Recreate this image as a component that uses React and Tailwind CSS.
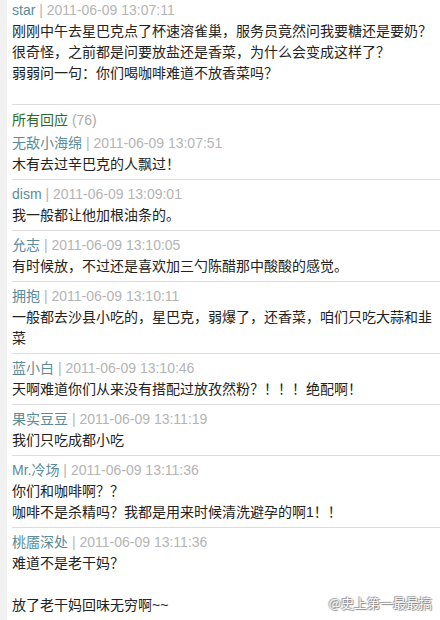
import React from "react";

const font = { fontFamily: '"Liberation Sans", Arial, "Noto Sans CJK SC", sans-serif' };

const comments = [
  { name: "dism", time: "2011-06-09 13:09:01", lines: ["我一般都让他加根油条的。"] },
  { name: "允志", time: "2011-06-09 13:10:05", lines: ["有时候放，不过还是喜欢加三勺陈醋那中酸酸的感觉。"] },
  { name: "拥抱", time: "2011-06-09 13:10:11", lines: ["一般都去沙县小吃的，星巴克，弱爆了，还香菜，咱们只吃大蒜和韭", "菜"] },
  { name: "蓝小白", time: "2011-06-09 13:10:46", lines: ["天啊难道你们从来没有搭配过放孜然粉？！！！绝配啊！"] },
  { name: "果实豆豆", time: "2011-06-09 13:11:19", lines: ["我们只吃成都小吃"] },
  { name: "Mr.冷场", time: "2011-06-09 13:11:36", lines: ["你们和咖啡啊？？", "咖啡不是杀精吗？我都是用来时候清洗避孕的啊1！！"] },
  { name: "桃靥深处", time: "2011-06-09 13:11:36", lines: ["难道不是老干妈？", "\u00a0", "放了老干妈回味无穷啊~~"] },
];

function Header({ name, time }) {
  return (
    <div className="h-[21px] leading-[21px] text-[14px] whitespace-nowrap">
      <span className="text-[#5b8c99]">{name}</span>
      <span className="text-[#b4b4b4]"> | {time}</span>
    </div>
  );
}

function Body({ lines }) {
  return (
    <div className="text-[14px] leading-[21px] text-[#222222]">
      {lines.map((l, i) => (
        <div key={i} className="h-[21px] whitespace-nowrap">{l}</div>
      ))}
    </div>
  );
}

export default function App() {
  return (
    <div className="relative w-[440px] h-[620px] overflow-hidden bg-[#f1f1f1] flex" style={font}>
      <div className="w-[7px] shrink-0" />
      <div className="flex-1 bg-white flex flex-col">
        <div className="pl-[5px]">
          <Header name="star" time="2011-06-09 13:07:11" />
          <Body
            lines={[
              "刚刚中午去星巴克点了杯速溶雀巢，服务员竟然问我要糖还是要奶？",
              "很奇怪，之前都是问要放盐还是香菜，为什么会变成这样了？",
              "弱弱问一句：你们喝咖啡难道不放香菜吗？",
            ]}
          />
        </div>
        <div className="h-[24px]" />
        <div className="ml-[5px] border-t border-[#dddddd] pt-[5px] pb-[4px]">
          <div className="h-[21px] leading-[21px] text-[14px]">
            <span className="text-[#2b6b2b]">所有回应</span>
            <span className="text-[#aaaaaa]"> (76)</span>
          </div>
          <div className="h-[2px]" />
          <Header name="无敌小海绵" time="2011-06-09 13:07:51" />
          <Body lines={["木有去过辛巴克的人飘过！"]} />
        </div>
        {comments.map((c, i) => (
          <div key={i} className="ml-[5px] border-t border-[#dddddd] pt-[4px] pb-[4px]">
            <Header name={c.name} time={c.time} />
            <Body lines={c.lines} />
          </div>
        ))}
        <div className="flex-1" />
      </div>
      <div
        className="absolute right-[8px] bottom-[9px] text-[13px] leading-[16px] text-white"
        style={{
          fontFamily: '"Noto Sans CJK SC", sans-serif',
          textShadow: "0 0 1px #777, 1px 1px 1px #888, -1px -1px 1px #999",
        }}
      >
        @史上第一最最搞
      </div>
    </div>
  );
}
